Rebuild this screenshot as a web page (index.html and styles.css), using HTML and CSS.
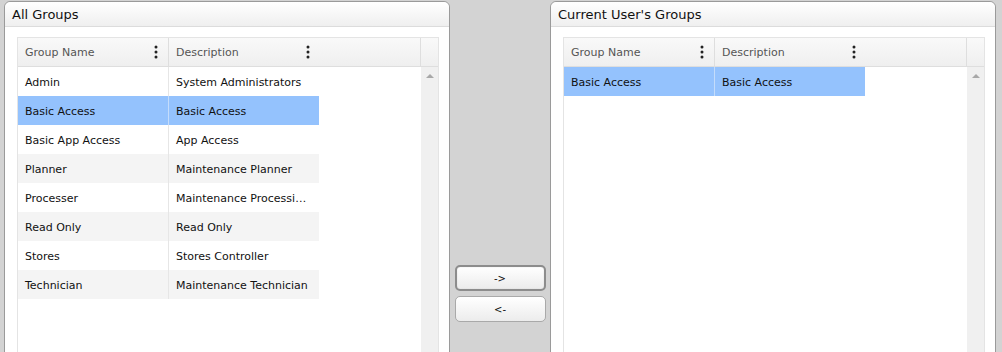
FILE: index.html
```html
<!DOCTYPE html>
<html lang="en">
<head>
    <meta charset="UTF-8">
    <title>User Groups</title>
    <link rel="stylesheet" href="styles.css">
</head>
<body>
    <div class="panel">
        <div class="panel-title">All Groups</div>
        <div class="panel-body">
            <div class="grid">
                <div class="grid-head">
                    <div class="head-cell col-first">Group Name <span class="kebab"><svg width="4" height="14" viewBox="0 0 4 14"><circle cx="2" cy="2" r="1.5"/><circle cx="2" cy="7" r="1.5"/><circle cx="2" cy="12" r="1.5"/></svg></span></div>
                    <div class="head-cell col-second">Description <span class="kebab"><svg width="4" height="14" viewBox="0 0 4 14"><circle cx="2" cy="2" r="1.5"/><circle cx="2" cy="7" r="1.5"/><circle cx="2" cy="12" r="1.5"/></svg></span></div>
                    <div class="head-fill"></div>
                    <div class="head-scroll"></div>
                </div>
                <div class="grid-body">
                    <div class="rows">
                        <div class="row"><div class="cell col-first">Admin</div><div class="cell col-second">System Administrators</div></div>
                        <div class="row selected"><div class="cell col-first">Basic Access</div><div class="cell col-second">Basic Access</div></div>
                        <div class="row"><div class="cell col-first">Basic App Access</div><div class="cell col-second">App Access</div></div>
                        <div class="row alt"><div class="cell col-first">Planner</div><div class="cell col-second">Maintenance Planner</div></div>
                        <div class="row"><div class="cell col-first">Processer</div><div class="cell col-second">Maintenance Processing Clerk</div></div>
                        <div class="row alt"><div class="cell col-first">Read Only</div><div class="cell col-second">Read Only</div></div>
                        <div class="row"><div class="cell col-first">Stores</div><div class="cell col-second">Stores Controller</div></div>
                        <div class="row alt"><div class="cell col-first">Technician</div><div class="cell col-second">Maintenance Technician</div></div>
                    </div>
                    <div class="scrollbar"><span class="arrow-up"></span></div>
                </div>
            </div>
        </div>
    </div>

    <div class="middle">
        <button class="move-btn focused">-&gt;</button>
        <button class="move-btn">&lt;-</button>
    </div>

    <div class="panel">
        <div class="panel-title">Current User's Groups</div>
        <div class="panel-body">
            <div class="grid">
                <div class="grid-head">
                    <div class="head-cell col-first">Group Name <span class="kebab"><svg width="4" height="14" viewBox="0 0 4 14"><circle cx="2" cy="2" r="1.5"/><circle cx="2" cy="7" r="1.5"/><circle cx="2" cy="12" r="1.5"/></svg></span></div>
                    <div class="head-cell col-second">Description <span class="kebab"><svg width="4" height="14" viewBox="0 0 4 14"><circle cx="2" cy="2" r="1.5"/><circle cx="2" cy="7" r="1.5"/><circle cx="2" cy="12" r="1.5"/></svg></span></div>
                    <div class="head-fill"></div>
                    <div class="head-scroll"></div>
                </div>
                <div class="grid-body">
                    <div class="rows">
                        <div class="row selected"><div class="cell col-first">Basic Access</div><div class="cell col-second">Basic Access</div></div>
                    </div>
                    <div class="scrollbar"><span class="arrow-up"></span></div>
                </div>
            </div>
        </div>
    </div>
</body>
</html>
```

FILE: styles.css
```css
body {
    margin: 0;
    height: 352px;
    overflow: hidden;
    background-color: #d3d3d3;
    font-family: "DejaVu Sans", Verdana, sans-serif;
    font-size: 11px;
    color: #111;
    display: flex;
    align-items: flex-start;
    padding: 1px 5px 0 4px;
}
.panel {
    width: 444px;
    height: 420px;
    background-color: #fff;
    border: 1px solid #9a9a9a;
    border-radius: 6px 6px 0 0;
    display: flex;
    flex-direction: column;
}
.panel-title {
    height: 24px;
    line-height: 26px;
    padding-left: 7px;
    font-size: 13px;
    color: #111;
    background: linear-gradient(#ffffff, #efefef);
    border-bottom: 1px solid #dcdcdc;
    border-radius: 6px 6px 0 0;
}
.panel-body {
    flex: 1;
    padding: 10px 10px 0 12px;
    display: flex;
}
.grid {
    flex: 1;
    border: 1px solid #e4e4e4;
    border-bottom: none;
    display: flex;
    flex-direction: column;
}
.grid-head {
    height: 28px;
    display: flex;
    background: linear-gradient(#f9f9f9, #efefef);
    border-bottom: 1px solid #dedede;
    color: #555;
}
.head-cell {
    width: 150px;
    box-sizing: border-box;
    padding: 1px 7px 0;
    line-height: 28px;
    display: flex;
    justify-content: space-between;
    align-items: center;
}
.head-cell.col-first {
    border-right: 1px solid #dedede;
    width: 151px;
    padding-right: 10px;
}
.head-cell.col-second {
    padding-right: 9px;
}
.kebab {
    display: flex;
    margin-top: -1px;
}
.kebab svg {
    fill: #222;
}
.head-fill {
    flex: 1;
    border-right: 1px solid #dedede;
}
.head-scroll {
    width: 17px;
}
.grid-body {
    flex: 1;
    display: flex;
}
.rows {
    flex: 1;
}
.row {
    display: flex;
    width: 301px;
    height: 29px;
    line-height: 31px;
}
.row.alt {
    background-color: #f4f4f4;
}
.row.selected {
    background-color: #94c2fd;
}
.cell {
    width: 150px;
    box-sizing: border-box;
    padding-left: 7px;
    white-space: nowrap;
    overflow: hidden;
    text-overflow: ellipsis;
}
.cell.col-first {
    width: 151px;
    border-right: 1px solid #e6e6e6;
}
.row.selected .cell.col-first {
    border-right-color: #c4dcfb;
}
.cell.col-second {
    padding-right: 8px;
}
.scrollbar {
    width: 17px;
    background-color: #f0f0f0;
    display: flex;
    justify-content: center;
    padding-top: 7px;
    box-sizing: border-box;
}
.arrow-up {
    width: 0;
    height: 0;
    border-left: 4px solid transparent;
    border-right: 4px solid transparent;
    border-bottom: 4px solid #a8a8a8;
}
.middle {
    width: 100px;
    display: flex;
    flex-direction: column;
    align-items: center;
    gap: 5px;
    padding-top: 264px;
}
.move-btn {
    width: 91px;
    height: 26px;
    font-family: "DejaVu Sans", Verdana, sans-serif;
    font-size: 10px;
    color: #111;
    background: linear-gradient(#ffffff, #ececec);
    border: 1px solid #a9a9a9;
    border-radius: 5px;
    padding: 0;
}
.move-btn.focused {
    border: 2px solid #8c8c8c;
    box-shadow: inset 0 0 1px #bbb;
}
```
